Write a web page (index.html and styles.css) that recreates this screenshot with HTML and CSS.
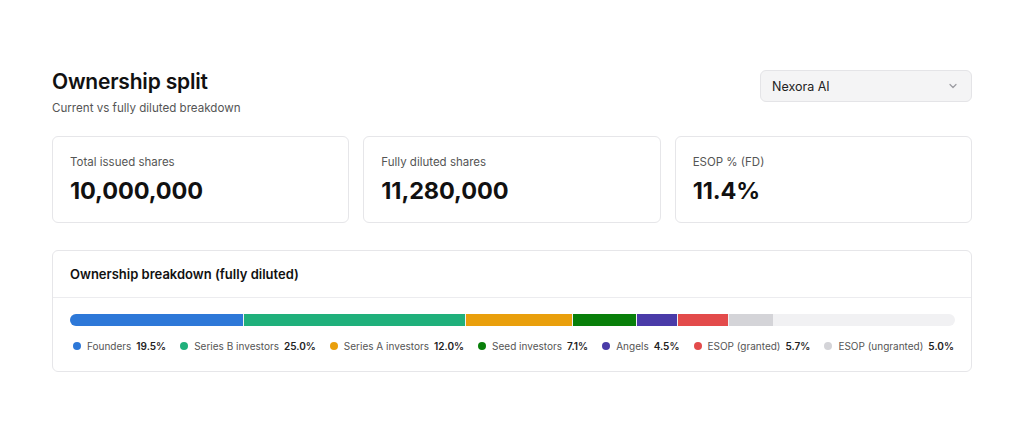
FILE: index.html
```html
<!DOCTYPE html>
<html lang="en">
<head>
    <meta charset="UTF-8">
    <meta name="viewport" content="width=device-width, initial-scale=1.0">
    <title>Ownership split</title>
    <link rel="stylesheet" href="styles.css">
</head>
<body>
    <div class="container">
        <div class="page-head">
            <div>
                <h1>Ownership split</h1>
                <p class="subtitle">Current vs fully diluted breakdown</p>
            </div>
            <div class="select">
                <span>Nexora AI</span>
                <svg width="12" height="12" viewBox="0 0 12 12"><path d="M3 4.5l3 3 3-3" fill="none" stroke="#9a9aa0" stroke-width="1.2" stroke-linecap="round" stroke-linejoin="round"/></svg>
            </div>
        </div>

        <div class="stats">
            <div class="card stat">
                <div class="stat-label">Total issued shares</div>
                <div class="stat-value">10,000,000</div>
            </div>
            <div class="card stat">
                <div class="stat-label">Fully diluted shares</div>
                <div class="stat-value">11,280,000</div>
            </div>
            <div class="card stat">
                <div class="stat-label">ESOP % (FD)</div>
                <div class="stat-value">11.4%</div>
            </div>
        </div>

        <div class="card breakdown">
            <div class="breakdown-head">Ownership breakdown (fully diluted)</div>
            <div class="breakdown-body">
                <div class="bar">
                    <div class="seg founders" style="width: 19.5%"></div>
                    <div class="seg seriesb" style="width: 25%"></div>
                    <div class="seg seriesa" style="width: 12%"></div>
                    <div class="seg seed" style="width: 7.1%"></div>
                    <div class="seg angels" style="width: 4.5%"></div>
                    <div class="seg granted" style="width: 5.7%"></div>
                    <div class="seg ungranted" style="width: 5%"></div>
                </div>
                <div class="legend">
                    <div class="item"><span class="dot founders"></span>Founders <b>19.5%</b></div>
                    <div class="item"><span class="dot seriesb"></span>Series B investors <b>25.0%</b></div>
                    <div class="item"><span class="dot seriesa"></span>Series A investors <b>12.0%</b></div>
                    <div class="item"><span class="dot seed"></span>Seed investors <b>7.1%</b></div>
                    <div class="item"><span class="dot angels"></span>Angels <b>4.5%</b></div>
                    <div class="item"><span class="dot granted"></span>ESOP (granted) <b>5.7%</b></div>
                    <div class="item"><span class="dot ungranted"></span>ESOP (ungranted) <b>5.0%</b></div>
                </div>
            </div>
        </div>
    </div>
</body>
</html>
```

FILE: styles.css
```css
body {
    margin: 0;
    padding: 0;
    background-color: #fff;
    font-family: Inter, "Liberation Sans", sans-serif;
    color: #111;
}

.container {
    width: 920px;
    margin: 0 auto;
    padding-top: 68px;
}

.page-head {
    display: flex;
    justify-content: space-between;
    align-items: flex-start;
}

h1 {
    margin: 0;
    font-size: 21px;
    font-weight: 600;
    line-height: 28px;
    letter-spacing: -0.2px;
    color: #111;
}

.subtitle {
    margin: 5px 0 0;
    font-size: 11.6px;
    color: #555;
}

.select {
    width: 212px;
    height: 32px;
    box-sizing: border-box;
    margin-top: 2px;
    padding: 0 12px 0 11px;
    display: flex;
    align-items: center;
    justify-content: space-between;
    background-color: #f4f4f5;
    border: 1px solid #e4e4e7;
    border-radius: 6px;
    font-size: 12.5px;
    color: #222;
}

.card {
    background-color: #fff;
    border: 1px solid #e6e6e9;
    border-radius: 6px;
}

.stats {
    display: grid;
    grid-template-columns: repeat(3, 1fr);
    gap: 14px;
    margin-top: 21px;
}

.stat {
    height: 87px;
    box-sizing: border-box;
    padding: 18px 17px 0;
}

.stat-label {
    font-size: 11.5px;
    color: #555;
}

.stat-value {
    margin-top: 7px;
    font-size: 23.5px;
    font-weight: 700;
    letter-spacing: -0.1px;
    color: #111;
}

.breakdown {
    margin-top: 27px;
}

.breakdown-head {
    height: 47px;
    box-sizing: border-box;
    padding: 15px 17px 0;
    font-size: 13px;
    font-weight: 600;
    border-bottom: 1px solid #ececef;
}

.breakdown-body {
    padding: 16px 16px 19px 17px;
}

.bar {
    display: flex;
    gap: 1px;
    height: 12px;
    background-color: #f1f1f3;
    border-radius: 6px;
    overflow: hidden;
}

.seg {
    height: 100%;
}

.founders { background-color: #2d78d8; }
.seriesb { background-color: #1fb07b; }
.seriesa { background-color: #e99f0c; }
.seed { background-color: #087f0a; }
.angels { background-color: #4a3ba8; }
.granted { background-color: #e34b4b; }
.ungranted { background-color: #d4d4d8; }

.legend {
    display: flex;
    justify-content: space-between;
    margin-top: 14px;
    padding-right: 1px;
    font-size: 10px;
    color: #555;
}

.item {
    display: flex;
    align-items: center;
    white-space: nowrap;
}

.item b {
    margin-left: 5px;
    color: #222;
    font-weight: 600;
}

.dot {
    width: 8px;
    height: 8px;
    border-radius: 50%;
    margin: 0 6px 0 3px;
}
```
